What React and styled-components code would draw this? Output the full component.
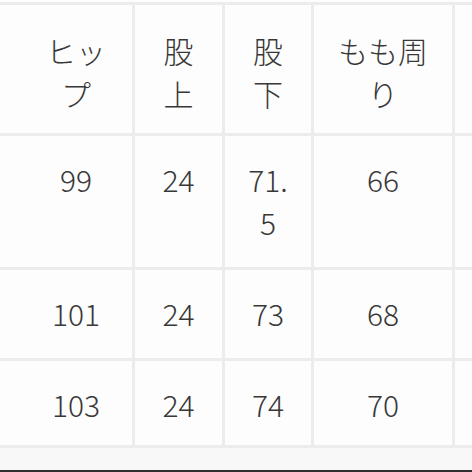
import React from "react";
import styled, { createGlobalStyle } from "styled-components";

const GlobalStyle = createGlobalStyle`
  html, body {
    margin: 0;
    padding: 0;
    background: #ffffff;
  }
  body {
    width: 472px;
    height: 472px;
    overflow: hidden;
    font-family: "Noto Sans CJK JP", "Noto Sans", sans-serif;
  }
`;

const Page = styled.div`
  display: flex;
  flex-direction: column;
  width: 472px;
  height: 472px;
  padding-top: 2px;
  box-sizing: border-box;
  background: #fdfdfd;
`;

const SizeGrid = styled.div`
  display: grid;
  grid-template-columns: 17px 112px 87px 86px 138px 17px;
  grid-template-rows: 128px 131px 88px 84px;
  gap: 3px;
  padding: 3px 0;
  background: #ececec;
`;

const Cell = styled.div`
  background: #fdfdfd;
  color: #383838;
  font-size: 30px;
  font-weight: 300;
  line-height: 43px;
  text-align: center;
  padding: ${(p) => (p.$head ? "24px 16px 0" : "22px 16px 0")};
  box-sizing: border-box;
  word-break: break-all;
  overflow: hidden;
`;

const Footer = styled.div`
  flex: 1;
  background: #f8f8f8;
  border-bottom: 2px solid #2e2e2e;
`;

const header = ["", "ヒップ", "股上", "股下", "もも周り", ""];
const rows = [
  ["", "99", "24", "71.5", "66", ""],
  ["", "101", "24", "73", "68", ""],
  ["", "103", "24", "74", "70", ""],
];

export default function App() {
  return (
    <>
      <GlobalStyle />
      <Page>
        <SizeGrid>
          {header.map((h, i) => (
            <Cell key={"h" + i} $head>
              {h}
            </Cell>
          ))}
          {rows.map((r, ri) =>
            r.map((v, ci) => <Cell key={ri + "-" + ci}>{v}</Cell>)
          )}
        </SizeGrid>
        <Footer />
      </Page>
    </>
  );
}
